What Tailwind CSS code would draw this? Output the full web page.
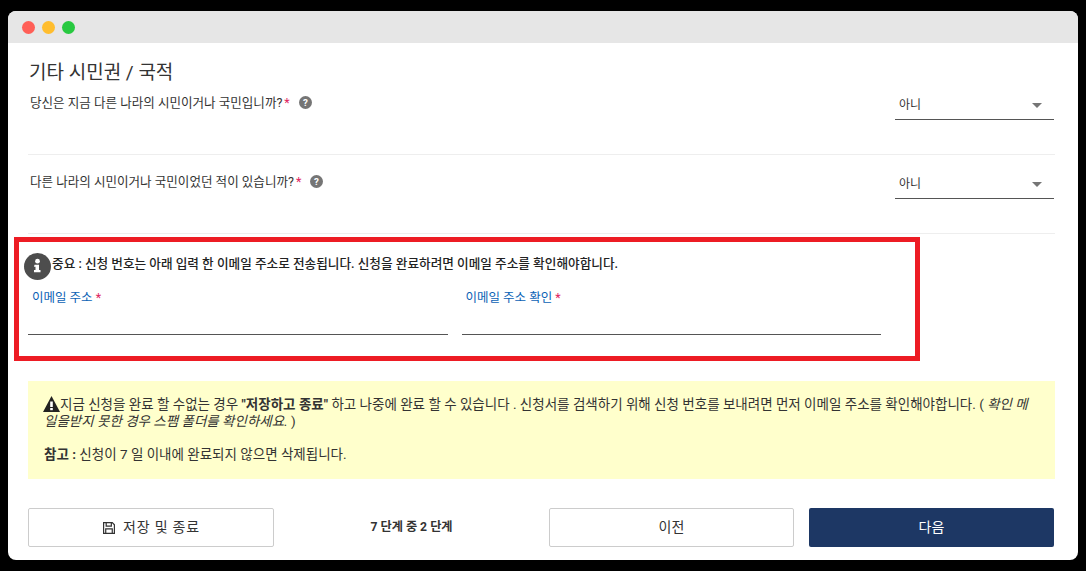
<!DOCTYPE html>
<html lang="ko">
<head>
<meta charset="utf-8">
<script src="https://cdn.jsdelivr.net/npm/@tailwindcss/browser@4"></script>
</head>
<body class="bg-black font-['Roboto','Noto_Sans_CJK_KR',sans-serif] text-[#333]">
<div class="w-[1086px] h-[571px] pt-[11px] pl-2 overflow-hidden">
  <div class="w-[1070px] h-[549px] bg-white rounded-lg overflow-hidden flex flex-col">
    <div class="h-8 bg-[#e6e6e6] flex items-center gap-[7px] pl-[14px] shrink-0">
      <span class="w-[13px] h-[13px] rounded-full bg-[#ff5f57]"></span>
      <span class="w-[13px] h-[13px] rounded-full bg-[#ffbd2e]"></span>
      <span class="w-[13px] h-[13px] rounded-full bg-[#28c940]"></span>
    </div>
    <div class="pl-5 pr-[23px] flex-1 flex flex-col">
      <h1 class="text-[19px] leading-[24px] mt-[18px] ml-px text-[#333] h-[23px]">기타 시민권 / 국적</h1>
      <div class="flex justify-between h-[71px] border-b border-[#eeeeee] pl-[2px] pr-px shrink-0">
        <div class="text-[12.55px] leading-[18px] mt-[10px] flex items-start">
          <span>당신은 지금 다른 나라의 시민이거나 국민입니까?</span><span class="text-[#e0245e] ml-[2px]">*</span>
          <svg class="w-[13px] h-[13px] ml-[9px] mt-[2px]" viewBox="0 0 16 16"><circle cx="8" cy="8" r="8" fill="#757575"/><text x="8" y="12.500" text-anchor="middle" font-size="12" font-weight="700" fill="#fff" font-family="Roboto">?</text></svg>
        </div>
        <div class="w-[159px] h-[24px] mt-[12px] border-b border-[#555] flex items-center justify-between pl-1 pr-[12px] pb-[5px] text-[12px] shrink-0">
          <span>아니</span><span class="w-0 h-0 border-x-[5px] border-x-transparent border-t-[5px] border-t-[#757575]"></span>
        </div>
      </div>
      <div class="flex justify-between h-[79px] border-b border-[#eeeeee] pl-[2px] pr-px shrink-0">
        <div class="text-[12.55px] leading-[18px] mt-[18px] flex items-start">
          <span>다른 나라의 시민이거나 국민이었던 적이 있습니까?</span><span class="text-[#e0245e] ml-[2px]">*</span>
          <svg class="w-[13px] h-[13px] ml-[9px] mt-[2px]" viewBox="0 0 16 16"><circle cx="8" cy="8" r="8" fill="#757575"/><text x="8" y="12.500" text-anchor="middle" font-size="12" font-weight="700" fill="#fff" font-family="Roboto">?</text></svg>
        </div>
        <div class="w-[159px] h-[24px] mt-[20px] border-b border-[#555] flex items-center justify-between pl-1 pr-[12px] pb-[5px] text-[12px] shrink-0">
          <span>아니</span><span class="w-0 h-0 border-x-[5px] border-x-transparent border-t-[5px] border-t-[#757575]"></span>
        </div>
      </div>
      <div class="w-[906px] h-[124px] mt-[3px] -ml-[14px] border-[5px] border-[#ed1c24] pl-[5px] shrink-0">
        <div class="flex items-center h-[28px] mt-[8px] gap-px">
          <svg class="w-[27px] h-[27px] shrink-0 mt-1" viewBox="0 0 27 27"><circle cx="13.500" cy="13.500" r="13.500" fill="#4d4d4d"/><circle cx="13.500" cy="8.200" r="2.400" fill="#fff"/><path d="M10.500 11.700h4.500v5.300h1.500v2.200h-6.500v-2.200h1.500v-3.200h-1.500z" fill="#fff"/></svg>
          <span class="text-[12.65px] font-medium text-[#222] whitespace-nowrap pt-px">중요 : 신청 번호는 아래 입력 한 이메일 주소로 전송됩니다. 신청을 완료하려면 이메일 주소를 확인해야합니다.</span>
        </div>
        <div class="grid grid-cols-2 gap-[14px] w-[853px] ml-1 mt-[10px]">
          <div class="h-[47px] border-b border-[#555] text-[12.5px] text-[#0b62b5] leading-[18px] pl-1 pt-px">이메일 주소 <span class="text-[#e0245e]">*</span></div>
          <div class="h-[47px] border-b border-[#555] text-[12.5px] text-[#0b62b5] leading-[18px] pl-1 pt-px">이메일 주소 확인 <span class="text-[#e0245e]">*</span></div>
        </div>
      </div>
      <div class="h-[98px] mt-[20px] bg-[#ffffcc] pl-4 pr-4 pt-[15px] text-[13.5px] leading-[17px] text-[#333] shrink-0">
        <p><svg class="inline-block w-[17px] h-[16px] -ml-px align-[-3px]" viewBox="0 0 17 16"><path d="M8.500 0 17 16H0z" fill="#222"/><rect x="7.200" y="5.500" width="2.600" height="5.500" fill="#fff"/><rect x="7.200" y="12" width="2.600" height="2.200" fill="#fff"/></svg>지금 신청을 완료 할 수없는 경우 <strong class="font-bold">"저장하고 종료"</strong> 하고 나중에 완료 할 수 있습니다 . 신청서를 검색하기 위해 신청 번호를 보내려면 먼저 이메일 주소를 확인해야합니다. ( <em>확인 메일을받지 못한 경우 스팸 폴더를 확인하세요.</em> )</p>
        <p class="mt-4"><strong class="font-bold">참고 :</strong> 신청이 7 일 이내에 완료되지 않으면 삭제됩니다.</p>
      </div>
      <div class="flex items-center mt-[29px] h-[39px] shrink-0">
        <button class="w-[246px] h-full border border-[#ccc] rounded-[2px] flex items-center justify-center gap-[7px] text-[14px] tracking-[0.8px] text-[#333]">
          <svg class="w-[14px] h-[14px]" viewBox="0 0 15 15" fill="none" stroke="#333" stroke-width="1.300"><path d="M1.700 1.700h9.300l2.300 2.300v9.300H1.700z"/><path d="M4.500 1.700v3.800h5.500V1.700M4 13.300V8.500h7v4.800"/></svg>
          저장 및 종료
        </button>
        <div class="w-[275px] text-center text-[12.2px] font-bold text-[#333]">7 단계 중 2 단계</div>
        <button class="w-[245px] h-full border border-[#ccc] rounded-[2px] text-[14px] text-[#333]">이전</button>
        <button class="w-[245px] h-full ml-[15px] bg-[#1d3764] rounded-[2px] text-[14px] text-white">다음</button>
      </div>
    </div>
  </div>
</div>
</body>
</html>
